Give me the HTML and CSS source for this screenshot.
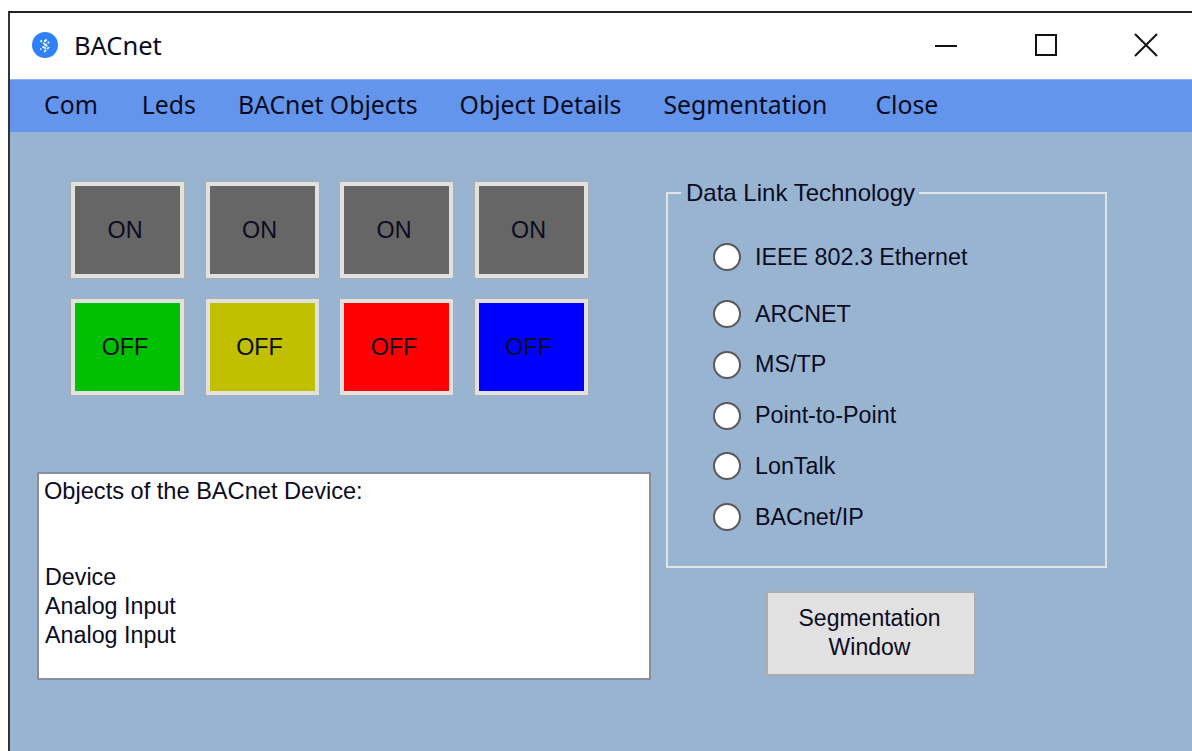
FILE: index.html
```html
<!DOCTYPE html>
<html lang="en">
<head>
<meta charset="utf-8">
<title>BACnet</title>
<link rel="stylesheet" href="styles.css">
</head>
<body>
<div class="window">
  <header class="titlebar">
    <svg class="app-icon" viewBox="0 0 26 26" width="26" height="26" aria-hidden="true">
      <circle cx="13" cy="13" r="13" fill="#2f80fb"/>
      <path d="M8.5 8.5 L16.5 15.5 L13 19 V7 L16.5 10.5 L8.5 17.5" fill="none" stroke="#fff" stroke-width="1.7" stroke-dasharray="2 1.5"/>
    </svg>
    <span class="app-title">BACnet</span>
    <div class="controls">
      <svg class="ctl" viewBox="0 0 24 24" width="24" height="24" aria-hidden="true"><path d="M1 13H23" stroke="#111" stroke-width="2"/></svg>
      <svg class="ctl" viewBox="0 0 24 24" width="24" height="24" aria-hidden="true"><rect x="2" y="2" width="20" height="20" fill="none" stroke="#111" stroke-width="2"/></svg>
      <svg class="ctl" viewBox="0 0 24 24" width="24" height="24" aria-hidden="true"><path d="M1 1L23 23M23 1L1 23" stroke="#111" stroke-width="2"/></svg>
    </div>
  </header>
  <nav class="menu">
    <span class="menu-com">Com</span>
    <span>Leds</span>
    <span>BACnet Objects</span>
    <span>Object Details</span>
    <span class="menu-seg">Segmentation</span>
    <span>Close</span>
  </nav>
  <main class="content">
    <section class="left">
      <div class="leds">
        <button class="led off-state">ON</button>
        <button class="led off-state">ON</button>
        <button class="led off-state">ON</button>
        <button class="led off-state">ON</button>
        <button class="led green">OFF</button>
        <button class="led yellow">OFF</button>
        <button class="led red">OFF</button>
        <button class="led blue">OFF</button>
      </div>
      <div class="objects">
        <div class="objects-head">Objects of the BACnet Device:</div>
        <div>Device</div>
        <div>Analog Input</div>
        <div>Analog Input</div>
      </div>
    </section>
    <section class="right">
      <fieldset class="group">
        <legend>Data Link Technology</legend>
        <label class="radio first"><span class="dot"></span>IEEE 802.3 Ethernet</label>
        <label class="radio second"><span class="dot"></span>ARCNET</label>
        <label class="radio"><span class="dot"></span>MS/TP</label>
        <label class="radio"><span class="dot"></span>Point-to-Point</label>
        <label class="radio"><span class="dot"></span>LonTalk</label>
        <label class="radio"><span class="dot"></span>BACnet/IP</label>
      </fieldset>
      <button class="seg-btn">Segmentation<br>Window</button>
    </section>
  </main>
</div>
</body>
</html>
```
FILE: styles.css
```css
* { box-sizing: border-box; }

html, body {
  margin: 0;
  height: 100%;
  overflow: hidden;
  background: #fff;
}

body {
  padding: 11px 0 0 8px;
  font-family: "Liberation Sans", Arial, sans-serif;
  font-size: 23.3px;
  color: #0b0b22;
}

.window {
  height: 740px;
  border-top: 2px solid #222;
  border-left: 2px solid #333;
  display: flex;
  flex-direction: column;
}

.titlebar {
  height: 66px;
  flex: none;
  display: flex;
  align-items: center;
  padding: 0 0 3px 22px;
  background: #fff;
}

.app-title {
  margin-left: 16px;
  font-family: "Noto Sans", sans-serif;
  font-size: 25.5px;
}

.controls {
  margin-left: auto;
  display: flex;
  gap: 76px;
  padding-right: 34px;
}

.menu {
  height: 53px;
  flex: none;
  display: flex;
  align-items: center;
  padding: 0 0 4px 34px;
  background: #6495ed;
  border-top: 1px solid #8fb2f0;
  font-family: "Noto Sans", sans-serif;
  font-size: 24.8px;
}

.menu span { margin-right: 42px; white-space: nowrap; }
.menu .menu-com { margin-right: 44px; }
.menu .menu-seg { margin-right: 48px; }

.content {
  flex: 1;
  display: flex;
  background: #99b4d1;
}

.left {
  width: 640px;
  flex: none;
  padding: 49px 0 0 27px;
}

.leds {
  display: grid;
  grid-template-columns: repeat(4, 115px);
  grid-auto-rows: 98px;
  column-gap: 19.5px;
  row-gap: 19px;
  margin-left: 33px;
}

.led {
  font: inherit;
  color: inherit;
  padding: 0 5px 0 0;
  border: 5px solid #e1e1e1;
  outline: 1px solid #adadad;
  outline-offset: -1px;
}

.off-state { background: #666; }
.green { background: #00c000; }
.yellow { background: #c0c000; }
.red { background: #f00; }
.blue { background: #00f; }

.objects {
  width: 614px;
  height: 208px;
  margin-top: 76px;
  padding: 3px 6px;
  background: #fff;
  border: 2px solid #888e99;
  line-height: 29px;
}

.objects-head {
  margin-bottom: 57px;
  margin-left: -1px;
  font-size: 23.6px;
}

.right {
  width: 441px;
  flex: none;
  margin-left: 16px;
  padding-top: 45px;
  display: flex;
  flex-direction: column;
}

.group {
  margin: 0;
  height: 391px;
  padding: 0;
  border: 2px solid #dfe3e8;
  display: flex;
  flex-direction: column;
}

.group legend {
  margin-left: 13px;
  padding: 0 4px 0 5px;
  font-size: 24px;
  line-height: 32px;
}

.radio {
  height: 50.75px;
  margin-left: 45px;
  display: flex;
  align-items: center;
  gap: 14px;
}

.first { margin-top: 23px; }
.second { margin-top: 6px; }

.dot {
  width: 28px;
  height: 28px;
  flex: none;
  border-radius: 50%;
  background: #fff;
  border: 2px solid #5a5a5a;
}

.seg-btn {
  width: 210px;
  height: 85px;
  margin: 23px 0 0 100px;
  padding: 0 3px 2px 0;
  font: inherit;
  font-size: 23px;
  line-height: 29px;
  color: inherit;
  background: #e1e1e1;
  border: 2px solid #adadad;
}
```
